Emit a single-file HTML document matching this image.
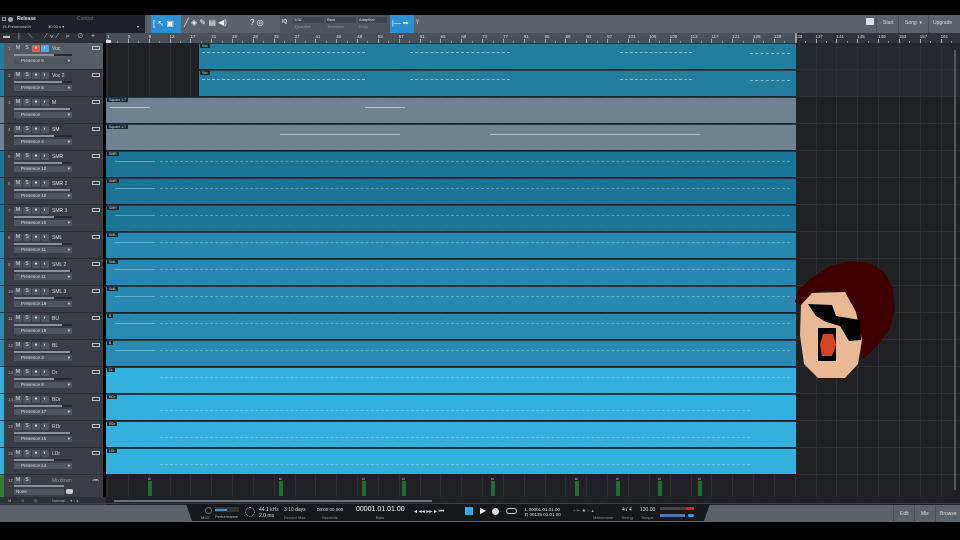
<!DOCTYPE html>
<html><head><meta charset="utf-8">
<style>
*{margin:0;padding:0;box-sizing:border-box}
body{width:960px;height:540px;background:#000;position:relative;overflow:hidden;font-family:"Liberation Sans",sans-serif;color:#cfd3d8;font-size:5px}
.a{position:absolute}
.btn{position:absolute;width:8px;height:7px;background:#50565e;border-radius:1px;color:#e0e0e0;font-size:5px;text-align:center;line-height:7px}
.lbl{position:absolute;font-size:4px;color:#8c939b}
</style></head><body>
<div class="a" style="left:0;top:15px;width:960px;height:18px;background:#5c626a"></div>
<div class="a" style="left:0;top:15px;width:145px;height:18px;background:#1d2026"></div>
<div class="a" style="left:2px;top:17px;width:4px;height:4px;border:1px solid #999"></div>
<div class="a" style="left:8px;top:17px;width:5px;height:5px;border-radius:50%;background:#aaa"></div>
<div class="a" style="left:17px;top:16px;font-size:5px;color:#ddd;font-weight:bold">Release</div>
<div class="a" style="left:77px;top:16px;font-size:5px;color:#777">Control</div>
<div class="a" style="left:2px;top:24px;font-size:4px;color:#ccc">19-Presence#19</div>
<div class="a" style="left:48px;top:24px;font-size:4px;color:#ccc">30.00 s ▾</div>
<div class="a" style="left:137px;top:24px;font-size:4px;color:#ccc">▾</div>
<div class="a" style="left:151px;top:15px;width:30px;height:18px;background:#2b8fd4"></div>
<div class="a" style="left:153px;top:19px;color:#fff;font-size:8px">[ ↖ ▣</div>
<div class="a" style="left:184px;top:18px;color:#eee;font-size:8px">╱ ◈ ✎ ▤ ◀)</div>
<div class="a" style="left:250px;top:18px;color:#eee;font-size:8px">? ◎</div>
<div class="a" style="left:280px;top:15px;width:110px;height:18px;background:#4e545c"></div>
<div class="a" style="left:282px;top:19px;color:#ddd;font-size:5px;font-weight:bold">IQ</div>
<div class="a" style="left:293px;top:17px;width:31px;height:6px;background:#3f454c;font-size:4px;color:#ddd;padding-left:1px">1/32</div>
<div class="a" style="left:326px;top:17px;width:30px;height:6px;background:#3f454c;font-size:4px;color:#ddd;padding-left:1px">Bars</div>
<div class="a" style="left:358px;top:17px;width:29px;height:6px;background:#3f454c;font-size:4px;color:#ddd;padding-left:1px">Adaptive</div>
<div class="lbl" style="left:295px;top:24px">Quantize</div><div class="lbl" style="left:327px;top:24px">Timebase</div><div class="lbl" style="left:359px;top:24px">Snap</div>
<div class="a" style="left:390px;top:15px;width:24px;height:18px;background:#2b8fd4;color:#fff;font-size:7px;padding:4px 2px">|— ➡</div>
<div class="a" style="left:416px;top:19px;color:#ccc;font-size:7px">⫯</div>
<div class="a" style="left:866px;top:18px;width:8px;height:7px;background:#ddd;border-radius:1px"></div>
<div class="a" style="left:876px;top:15px;width:1px;height:18px;background:#4a4f56"></div>
<div class="a" style="left:883px;top:20px;font-size:5px;color:#ddd">Start</div>
<div class="a" style="left:898px;top:15px;width:1px;height:18px;background:#4a4f56"></div>
<div class="a" style="left:905px;top:20px;font-size:5px;color:#ddd">Song &nbsp;▾</div>
<div class="a" style="left:928px;top:15px;width:1px;height:18px;background:#4a4f56"></div>
<div class="a" style="left:933px;top:20px;font-size:5px;color:#ddd">Upgrade</div>

<div class="a" style="left:0;top:33px;width:106px;height:10px;background:#2d3137"></div>
<div class="a" style="left:3px;top:33px;font-size:7px;color:#bbb;letter-spacing:3px">▬ | ⟍ &nbsp;⁄∨⁄ ⊧ ⊘ +</div>
<div class="a" style="left:106px;top:33px;width:690px;height:10px;background:#4a5058"></div>
<div class="a" style="left:796px;top:33px;width:164px;height:10px;background:#30343a"></div>
<div id="ruler"></div>

<div class="a" style="left:106px;top:43px;width:854px;height:455px;background:#1f2125"></div>
<div class="a" style="left:796px;top:43px;width:164px;height:54px;background:#24272b"></div>
<div id="grid"></div>
<div id="tracks"></div>

<svg class="a" style="left:780px;top:250px" width="130" height="135" viewBox="780 250 130 135">
<polygon fill="#3f0000" points="795,302 798,290 812,278 830,266 850,261 870,263 884,272 893,288 895,310 890,328 878,345 862,360 858,330 848,298 830,290 812,293 802,305"/>
<polygon fill="#e9b996" points="812,293 845,292 856,312 862,340 858,364 845,378 818,378 804,364 800,335 801,305"/>
<polygon fill="#000" points="808,304 832,305 836,316 860,320 861,340 849,341 840,326 826,322 816,316"/>
<rect x="818" y="328" width="18" height="33" fill="#000"/>
<polygon fill="#d64424" points="823,334 833,334 836,345 832,356 822,356 820,345"/>
</svg>

<div class="a" style="left:0;top:497px;width:106px;height:8px;background:#2d3137"></div>
<div class="a" style="left:8px;top:498px;font-size:4px;color:#aaa">M &nbsp; &nbsp; &nbsp; &nbsp; S &nbsp; &nbsp; &nbsp; &nbsp; ◎ &nbsp; &nbsp; &nbsp; &nbsp; &nbsp; &nbsp; Normal &nbsp; &nbsp; ▾ ▫ ◂</div>
<div class="a" style="left:106px;top:497px;width:854px;height:8px;background:#1f2125"></div>
<div class="a" style="left:114px;top:500px;width:318px;height:2px;background:#6a7078"></div>
<div class="a" style="left:0;top:505px;width:960px;height:17px;background:#5c626a"></div>
<div class="a" style="left:0;top:503px;width:960px;height:1px;background:#3a3e44"></div>
<svg class="a" style="left:186px;top:503px" width="524" height="19"><polygon points="0,1 524,1 518,18 6,18" fill="#16181b"/></svg>
<div class="a" style="left:205px;top:507px;width:7px;height:7px;border:1px solid #666;border-radius:50%"></div>
<div class="lbl" style="left:201px;top:515px">MIDI</div>
<div class="a" style="left:215px;top:507px;width:24px;height:5px;background:#333"><div style="width:12px;height:2px;margin-top:2px;background:#4a90c0"></div></div>
<div class="lbl" style="left:215px;top:514px;color:#bbb">Performance</div>
<div class="a" style="left:245px;top:507px;width:10px;height:10px;border:1px dotted #aaa;border-radius:50%"></div>
<div class="a" style="left:259px;top:507px;font-size:5px;color:#ddd">44.1 kHz<br>2.0 ms</div>
<div class="a" style="left:284px;top:507px;font-size:5px;color:#ddd">3:10 days</div><div class="lbl" style="left:284px;top:515px">Record Max</div>
<div class="a" style="left:317px;top:507px;font-size:4.5px;color:#ddd">00:00:00.000</div><div class="lbl" style="left:322px;top:515px">Seconds</div>
<div class="a" style="left:356px;top:506px;font-size:7px;color:#fff">00001.01.01.00</div><div class="lbl" style="left:376px;top:515px">Bars</div>
<div class="a" style="left:414px;top:508px;font-size:6px;color:#ddd">◂ ◂◂ ▸▸ ▸ ⏮</div>
<div class="a" style="left:465px;top:507px;width:8px;height:8px;background:#2ba8e8"></div>
<div class="a" style="left:480px;top:506px;font-size:8px;color:#eee">▶</div>
<div class="a" style="left:492px;top:508px;width:7px;height:7px;background:#ddd;border-radius:50%"></div>
<div class="a" style="left:506px;top:508px;width:11px;height:6px;border:1px solid #ccc;border-radius:3px"></div>
<div class="a" style="left:525px;top:507px;font-size:4.5px;color:#ddd">L 00001.01.01.00<br>R 00135.01.01.00</div>
<div class="a" style="left:573px;top:508px;font-size:4px;color:#aaa">⌁ ⊢ &nbsp;✱ ⟍ ▲</div>
<div class="lbl" style="left:593px;top:515px">Metronome</div>
<div class="a" style="left:622px;top:507px;font-size:5px;color:#ddd">4 / 4</div><div class="lbl" style="left:621px;top:515px">Timing</div>
<div class="a" style="left:640px;top:507px;font-size:5px;color:#ddd">130.00</div><div class="lbl" style="left:641px;top:515px">Tempo</div>
<div class="a" style="left:660px;top:507px;width:34px;height:3px;background:#444"><div style="margin-left:26px;width:8px;height:3px;background:#d42020"></div></div>
<div class="a" style="left:660px;top:514px;width:25px;height:3px;background:#4a78a8"></div>
<div class="a" style="left:688px;top:514px;width:6px;height:3px;background:#2ba8e8;border-radius:2px"></div>
<div class="a" style="left:893px;top:505px;width:1px;height:17px;background:#4a4f56"></div>
<div class="a" style="left:900px;top:511px;font-size:5px;color:#ddd">Edit</div>
<div class="a" style="left:914px;top:505px;width:1px;height:17px;background:#4a4f56"></div>
<div class="a" style="left:921px;top:511px;font-size:5px;color:#ddd">Mix</div>
<div class="a" style="left:935px;top:505px;width:1px;height:17px;background:#4a4f56"></div>
<div class="a" style="left:940px;top:511px;font-size:5px;color:#ddd">Browse</div>

<script>
function bx(n){return 107+(n-1)*5.21;}
var r='';
for(var n=1;n<=189;n+=4){var x=bx(n);if(x>950)break;
 r+='<div class="a" style="left:'+x+'px;top:34px;font-size:4.5px;color:#ddd">'+n+'</div>';
 r+='<div class="a" style="left:'+x+'px;top:39px;width:1px;height:4px;background:#aaa"></div>';
 if(x+10.4<958)r+='<div class="a" style="left:'+(x+10.4)+'px;top:41px;width:1px;height:2px;background:#888"></div>';}
r+='<div class="a" style="left:106px;top:40px;width:5px;height:3px;background:#ddd"></div>';
r+='<div class="a" style="left:795px;top:33px;width:2px;height:10px;background:#999"></div>';
document.getElementById('ruler').innerHTML=r;
var g='';
for(var n=1;n<=189;n+=4){var x=bx(n);if(x>958)break;g+='<div class="a" style="left:'+x+'px;top:43px;width:1px;height:454px;background:#2b2e33"></div>';}
for(var i=1;i<=16;i++){g+='<div class="a" style="left:796px;top:'+(43+i*27-1)+'px;width:164px;height:1px;background:#2b2e33"></div>';}
g+='<div class="a" style="left:954px;top:50px;width:2px;height:440px;background:#55595f"></div>';
document.getElementById('grid').innerHTML=g;
var T=[["Voc","Presence 8","#237d9e",199,"Voc"],["Voc 2","Presence 8","#237d9e",199,"Voc"],["M","Presence","#6f828f",106,"Square 1.7"],["SM","Presence 4","#6f828f",106,"Square 1.7"],
["SMR","Presence 10","#1d7596",106,"SMR"],["SMR 2","Presence 10","#1d7596",106,"SMR"],["SMR 3","Presence 10","#1d7596",106,"SMR"],
["SML","Presence 11","#2789b1",106,"SML"],["SML 2","Presence 11","#2789b1",106,"SML"],["SML 3","Presence 19","#2789b1",106,"SML"],
["BU","Presence 19","#2a8bb2",106,"B"],["BL","Presence 3","#2a8bb2",106,"B"],["Dr","Presence 8","#33b1dd",106,"Dr"],["BDr","Presence 17","#33b1dd",106,"BDr"],["RDr","Presence 15","#33b1dd",106,"RDr"],["LDr","Presence 14","#33b1dd",106,"LDr"]];
var h='';
for(var i=0;i<16;i++){var t=T[i],y=43+i*27,sel=i==0;
 h+='<div class="a" style="left:0;top:'+y+'px;width:103px;height:27px;background:'+(sel?'#565c64':'#3a3e44')+';border-bottom:1px solid #2a2d32"></div>';
 h+='<div class="a" style="left:0;top:'+y+'px;width:4px;height:26px;background:'+t[2]+'"></div>';
 h+='<div class="a" style="left:8px;top:'+(y+3)+'px;font-size:4.5px;color:#aaa">'+(i+1)+'</div>';
 h+='<div class="btn" style="left:14px;top:'+(y+2)+'px">M</div><div class="btn" style="left:23px;top:'+(y+2)+'px">S</div>';
 h+='<div class="btn" style="left:32px;top:'+(y+2)+'px;'+(sel?'background:#f05a4a':'')+'">●</div><div class="btn" style="left:41px;top:'+(y+2)+'px;'+(sel?'background:#3fb0e6':'')+'">◐</div>';
 h+='<div class="a" style="left:52px;top:'+(y+3)+'px;font-size:5px;color:#ddd">'+t[0]+'</div>';
 h+='<div class="a" style="left:92px;top:'+(y+3)+'px;width:8px;height:4px;border:1px solid #bbb"></div>';
 h+='<div class="a" style="left:14px;top:'+(y+11)+'px;width:58px;height:2px;background:#26292d"><div style="width:'+(40+i%3*8)+'px;height:2px;background:#8a9098"></div></div>';
 h+='<div class="a" style="left:14px;top:'+(y+15)+'px;width:58px;height:6px;background:#50565e;font-size:4.5px;color:#ddd;padding-left:7px;line-height:6px">'+t[1]+'<span style="float:right;padding-right:2px">▾</span></div>';
 h+='<div class="a" style="left:'+t[3]+'px;top:'+y+'px;width:'+(796-t[3])+'px;height:26px;background:'+t[2]+'"></div>';
 h+='<div class="a" style="left:'+t[3]+'px;top:'+y+'px;height:1px;background:#1a3c4a;width:'+(796-t[3])+'px"></div>';
 h+='<div class="a" style="left:'+(t[3]+1)+'px;top:'+(y+1)+'px;height:4px;background:#1c2a32;font-size:3.5px;color:#ddd;padding:0 2px;line-height:4px">'+t[4]+'</div>';
 var ly=y+12, col='rgba(230,240,245,0.55)';
 if(i<2){h+='<div class="a" style="left:202px;top:'+(ly-3)+'px;width:163px;height:1px;border-top:1px dashed '+col+'"></div><div class="a" style="left:410px;top:'+(ly-3)+'px;width:100px;height:1px;border-top:1px dashed '+col+'"></div><div class="a" style="left:620px;top:'+(ly-3)+'px;width:72px;height:1px;border-top:1px dashed '+col+'"></div><div class="a" style="left:750px;top:'+(ly-2)+'px;width:40px;height:1px;border-top:1px dashed '+col+'"></div>';}
 else if(i<4){h+='<div class="a" style="left:'+(i==2?110:280)+'px;top:'+(ly-2)+'px;width:'+(i==2?40:120)+'px;height:1px;background:'+col+'"></div><div class="a" style="left:'+(i==2?365:490)+'px;top:'+(ly-2)+'px;width:'+(i==2?40:210)+'px;height:1px;background:'+col+'"></div>';}
 else {h+='<div class="a" style="left:'+(i<12?115:150)+'px;top:'+(ly-2)+'px;width:'+(i<12?40:0)+'px;height:1px;background:rgba(230,240,245,0.35)"></div><div class="a" style="left:160px;top:'+(ly-2+(i>=13?6:0))+'px;width:'+(i>=13?590:630)+'px;height:1px;border-top:1px dashed rgba(230,240,245,0.3)"></div>';}
}
var y=475;
h+='<div class="a" style="left:0;top:'+y+'px;width:103px;height:22px;background:#3a3e44"></div><div class="a" style="left:0;top:'+y+'px;width:4px;height:22px;background:#2e7d3a"></div>';
h+='<div class="a" style="left:8px;top:'+(y+3)+'px;font-size:4.5px;color:#aaa">17</div><div class="btn" style="left:14px;top:'+(y+2)+'px">M</div><div class="btn" style="left:23px;top:'+(y+2)+'px">S</div>';
h+='<div class="a" style="left:52px;top:'+(y+3)+'px;font-size:5px;color:#999">Mixdown</div><div class="a" style="left:92px;top:'+(y+2)+'px;font-size:6px;color:#ddd">ᨏ</div>';
h+='<div class="a" style="left:14px;top:'+(y+10)+'px;width:50px;height:2px;background:#8a9098"></div>';
h+='<div class="a" style="left:14px;top:'+(y+14)+'px;width:50px;height:6px;background:#50565e;font-size:4.5px;color:#ddd;padding-left:2px;line-height:6px">None</div>';
h+='<div class="a" style="left:66px;top:'+(y+14)+'px;width:7px;height:5px;background:#ccc;border-radius:2px"></div>';
[148,279,362,402,491,575,616,658,698].forEach(function(x){h+='<div class="a" style="left:'+x+'px;top:477px;font-size:3px;color:#ddd">M</div><div class="a" style="left:'+x+'px;top:481px;width:4px;height:15px;background:#1e6a38"></div>';});
document.getElementById('tracks').innerHTML=h;
</script>
</body></html>
